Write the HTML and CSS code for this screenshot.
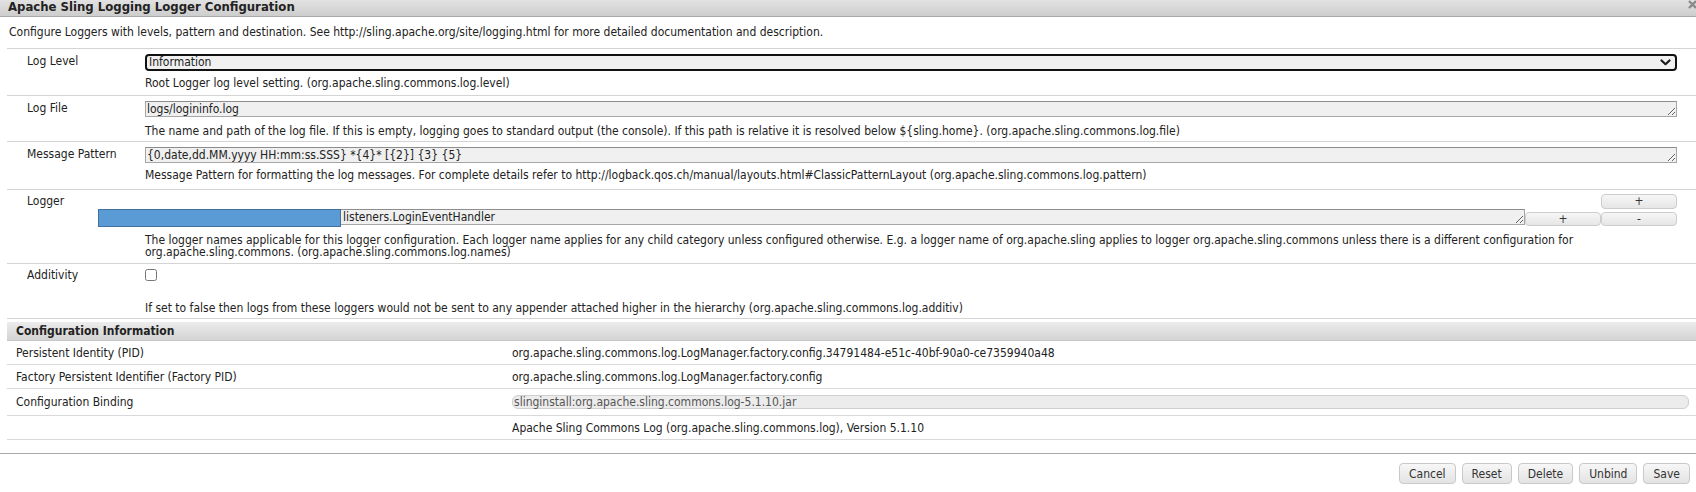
FILE: index.html
```html
<!DOCTYPE html>
<html>
<head>
<meta charset="utf-8">
<title>Apache Sling Logging Logger Configuration</title>
<link rel="stylesheet" href="styles.css">
</head>
<body>
<div class="dialog">
  <div class="titlebar">
    <span class="title">Apache Sling Logging Logger Configuration</span>
    <svg class="close" width="9" height="10" viewBox="0 0 9 10"><path d="M2 1 L9 8 M9 1 L2 8" stroke="#8a8a8a" stroke-width="2.4"/></svg>
  </div>
  <div class="desc">Configure Loggers with levels, pattern and destination. See http://sling.apache.org/site/logging.html for more detailed documentation and description.</div>

  <div class="form">
    <div class="row r1">
      <div class="label">Log Level</div>
      <div class="field">
        <div class="selwrap">
          <select class="sel"><option>Information</option></select>
          <svg class="chev" width="11" height="7" viewBox="0 0 11 7"><polyline points="1.5,1.5 5.5,5.2 9.5,1.5" fill="none" stroke="#1a1a1a" stroke-width="2.2" stroke-linecap="round" stroke-linejoin="round"/></svg>
        </div>
        <div class="help">Root Logger log level setting. (org.apache.sling.commons.log.level)</div>
      </div>
    </div>

    <div class="row r2">
      <div class="label">Log File</div>
      <div class="field">
        <textarea class="ta" rows="1">logs/logininfo.log</textarea>
        <div class="help">The name and path of the log file. If this is empty, logging goes to standard output (the console). If this path is relative it is resolved below ${sling.home}. (org.apache.sling.commons.log.file)</div>
      </div>
    </div>

    <div class="row r3">
      <div class="label">Message Pattern</div>
      <div class="field">
        <textarea class="ta" rows="1">{0,date,dd.MM.yyyy HH:mm:ss.SSS} *{4}* [{2}] {3} {5}</textarea>
        <div class="help">Message Pattern for formatting the log messages. For complete details refer to http://logback.qos.ch/manual/layouts.html#ClassicPatternLayout (org.apache.sling.commons.log.pattern)</div>
      </div>
    </div>

    <div class="row r4">
      <div class="label">Logger</div>
      <div class="field">
        <div class="multi">
          <div class="mrow top">
            <div class="spacer"></div>
            <button class="sbtn wide">+</button>
          </div>
          <div class="mrow">
            <div class="tawrap">
              <textarea class="ta logger" rows="1">listeners.LoginEventHandler</textarea>
              <div class="redact"></div>
            </div>
            <button class="sbtn">+</button>
            <button class="sbtn wide">-</button>
          </div>
        </div>
        <div class="help">The logger names applicable for this logger configuration. Each logger name applies for any child category unless configured otherwise. E.g. a logger name of org.apache.sling applies to logger org.apache.sling.commons unless there is a different configuration for<br>org.apache.sling.commons. (org.apache.sling.commons.log.names)</div>
      </div>
    </div>

    <div class="row r5">
      <div class="label">Additivity</div>
      <div class="field">
        <input type="checkbox" class="cb">
        <div class="help">If set to false then logs from these loggers would not be sent to any appender attached higher in the hierarchy (org.apache.sling.commons.log.additiv)</div>
      </div>
    </div>
  </div>

  <div class="config">
    <div class="chead">Configuration Information</div>
    <div class="crow">
      <div class="clabel">Persistent Identity (PID)</div>
      <div class="cval">org.apache.sling.commons.log.LogManager.factory.config.34791484-e51c-40bf-90a0-ce7359940a48</div>
    </div>
    <div class="crow">
      <div class="clabel">Factory Persistent Identifier (Factory PID)</div>
      <div class="cval">org.apache.sling.commons.log.LogManager.factory.config</div>
    </div>
    <div class="crow bind">
      <div class="clabel">Configuration Binding</div>
      <div class="cval"><div class="bindbox">slinginstall:org.apache.sling.commons.log-5.1.10.jar</div></div>
    </div>
    <div class="crow">
      <div class="clabel"></div>
      <div class="cval">Apache Sling Commons Log (org.apache.sling.commons.log), Version 5.1.10</div>
    </div>
  </div>

  <div class="footer">
    <button class="btn">Cancel</button>
    <button class="btn">Reset</button>
    <button class="btn">Delete</button>
    <button class="btn">Unbind</button>
    <button class="btn">Save</button>
  </div>
</div>
</body>
</html>
```

FILE: styles.css
```css
* { box-sizing: border-box; }
html, body { margin: 0; padding: 0; background: #fff; }
body {
  font-family: "DejaVu Sans Condensed", "DejaVu Sans", sans-serif;
  font-stretch: condensed;
  font-size: 12px;
  color: #222;
}
.dialog { width: 1696px; }

.titlebar {
  height: 17px;
  background: linear-gradient(#e2e2e2, #cdcdcd);
  border-bottom: 1px solid #a8a8a8;
  display: flex;
  justify-content: space-between;
  align-items: flex-start;
  overflow: hidden;
}
.title {
  font-weight: bold;
  font-size: 13px;
  line-height: 14px;
  padding-left: 8px;
  color: #222;
}
.close { display: block; margin-top: 0; }

.desc {
  padding: 9px 0 0 9px;
  height: 31px;
  line-height: 12px;
}

.form { margin-left: 7px; }
.row {
  display: grid;
  grid-template-columns: 118px 1fr;
  border-top: 1px solid #d4d4d4;
  padding: 5px 16px 6px 20px;
}
.label { line-height: 12px; padding-top: 1px; }
.field { min-width: 0; }
.help { line-height: 12px; margin-top: 6px; }

.selwrap { position: relative; width: 1532px; }
.sel {
  appearance: none;
  -webkit-appearance: none;
  display: block;
  width: 100%;
  height: 17px;
  border: 2px solid #111;
  border-radius: 4px;
  background: #f0f0f0;
  font: inherit;
  color: #222;
  padding: 0 2px;
  line-height: 13px;
}
.chev { position: absolute; right: 6px; top: 5px; }
.r1 .help { margin-top: 6px; }

.ta {
  display: block;
  width: 1532px;
  height: 16px;
  border: 1px solid #a6a6a6;
  border-top-color: #8d8d8d;
  background: #f0f0f0;
  font: inherit;
  color: #222;
  padding: 0 1px;
  line-height: 14px;
  overflow: hidden;
  white-space: nowrap;
}
.r2 { padding-top: 5px; padding-bottom: 4px; }
.r2 .label { padding-top: 1px; }
.r2 .help { margin-top: 8px; }

.r3 .help { margin-top: 6px; }
.r3 { padding-bottom: 8px; }

.r4 { padding-top: 4px; padding-bottom: 5px; }
.r4 .label { padding-top: 1px; }
.multi { width: 1532px; }
.mrow { display: flex; align-items: flex-start; }
.mrow.top { height: 15px; }
.spacer { flex: 1; }
.tawrap { position: relative; flex: 1; }
.ta.logger { width: 100%; height: 16px; padding-left: 197px; }
.redact {
  position: absolute;
  left: -47px;
  top: 0;
  width: 243px;
  height: 18px;
  background: #5b9bd5;
  border: 1px solid #41719c;
}
.sbtn {
  font: inherit;
  color: #333;
  height: 15px;
  line-height: 11px;
  padding: 0;
  border: 1px solid #cdcdcd;
  border-radius: 4px;
  background: linear-gradient(#f6f6f6, #e6e6e6);
  width: 76px;
}
.sbtn.wide { width: 76px; }
.mrow .sbtn { margin-top: 3px; height: 14px; }
.mrow.top .sbtn { margin-top: 0; height: 15px; }
.r4 .help { margin-top: 8px; }

.r5 { padding-bottom: 4px; }
.r5 .label { padding-top: 0; }
.cb {
  display: block;
  margin: 0;
  width: 12px;
  height: 12px;
}
.r5 .help { margin-top: 21px; }

.config {
  margin-left: 7px;
  border-top: 1px solid #d4d4d4;
  padding-top: 3px;
}
.chead {
  height: 19px;
  background: linear-gradient(#ececec, #d3d3d3);
  font-weight: bold;
  padding-left: 9px;
  line-height: 19px;
  border-bottom: 1px solid #c8c8c8;
}
.crow {
  display: grid;
  grid-template-columns: 496px 1fr;
  height: 24px;
  align-items: center;
  border-bottom: 1px solid #d9d9d9;
  padding-left: 9px;
  line-height: 12px;
}
.crow.bind { height: 27px; }
.bindbox {
  width: 1177px;
  height: 14px;
  border: 1px solid #cfcfcf;
  border-radius: 6px;
  background: #ececec;
  color: #555;
  line-height: 12px;
  padding-left: 1px;
}

.footer {
  margin-top: 13px;
  border-top: 1px solid #a9a9a9;
  padding: 9px 6px 0 0;
  display: flex;
  justify-content: flex-end;
  gap: 6px;
}
.btn {
  font: inherit;
  color: #333;
  height: 21px;
  padding: 0 9px;
  border: 1px solid #c9c9c9;
  border-radius: 4px;
  background: linear-gradient(#f7f7f7, #e3e3e3);
}
```
